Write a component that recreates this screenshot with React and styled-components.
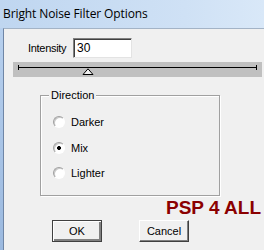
import styled, { createGlobalStyle } from 'styled-components';

const GlobalStyle = createGlobalStyle`
  html, body {
    margin: 0;
    padding: 0;
    background: #f0f0f0;
  }
  body {
    font-family: 'Liberation Sans', Arial, sans-serif;
    font-size: 11px;
    color: #000;
  }
`;

const directions = [
  { label: 'Darker', checked: false },
  { label: 'Mix', checked: true },
  { label: 'Lighter', checked: false },
];

function App() {
  return (
    <>
      <GlobalStyle />
      <Window>
        <TitleBar>Bright Noise Filter Options</TitleBar>
        <Body>
          <Frame />
          <Client>
            <IntensityRow>
              <Label>Intensity</Label>
              <NumberBox>30</NumberBox>
            </IntensityRow>
            <SliderTrack>
              <SliderLine />
              <Thumb width="12" height="7" viewBox="0 0 12 7">
                <path d="M6 0.8 L11 6.5 L1 6.5 Z" fill="#f0f0f0" stroke="#000" strokeWidth="1" />
              </Thumb>
            </SliderTrack>
            <GroupBox>
              <Caption>Direction</Caption>
              {directions.map((d) => (
                <RadioRow key={d.label}>
                  <Radio $checked={d.checked} />
                  <span>{d.label}</span>
                </RadioRow>
              ))}
            </GroupBox>
            <Watermark>PSP 4 ALL</Watermark>
            <ButtonRow>
              <Button $default>OK</Button>
              <Button>Cancel</Button>
            </ButtonRow>
          </Client>
        </Body>
      </Window>
    </>
  );
}

const Window = styled.div`
  width: 264px;
  height: 250px;
  display: flex;
  flex-direction: column;
  overflow: hidden;
`;

const TitleBar = styled.div`
  height: 28px;
  box-sizing: border-box;
  padding: 5px 0 0 3px;
  font-family: 'Open Sans', 'Noto Sans', sans-serif;
  font-size: 12px;
  letter-spacing: -0.1px;
  background: linear-gradient(to right, #bfd6f0, #cfe1f5 70%, #d9e8f8);
  color: #000;
`;

const Body = styled.div`
  flex: 1;
  display: flex;
`;

const Frame = styled.div`
  width: 3px;
  background: linear-gradient(to bottom, #b7d0ee, #9bb9df);
`;

const Client = styled.div`
  flex: 1;
  display: flex;
  flex-direction: column;
  background: #f0f0f0;
  border-left: 1px solid #6f86a6;
  border-top: 1px solid #a3b3c6;
  padding-top: 9px;
`;

const IntensityRow = styled.div`
  display: flex;
  align-items: center;
  height: 20px;
  padding-left: 24px;
`;

const Label = styled.span`
  width: 45px;
  letter-spacing: -0.3px;
`;

const NumberBox = styled.div`
  width: 59px;
  height: 20px;
  box-sizing: border-box;
  background: #fff;
  border: 1px solid;
  border-color: #808080 #e3e3e3 #e3e3e3 #808080;
  box-shadow: inset 1px 1px 0 #404040;
  padding: 2px 0 0 3px;
  font-size: 12px;
`;

const SliderTrack = styled.div`
  position: relative;
  height: 15px;
  margin: 4px 2px 0 9px;
  background: #c0c0c0;
`;

const SliderLine = styled.div`
  position: absolute;
  left: 5px;
  right: 5px;
  top: 5px;
  height: 1px;
  background: #000;
  &::before,
  &::after {
    content: '';
    position: absolute;
    top: -2px;
    width: 1px;
    height: 5px;
    background: #000;
  }
  &::before {
    left: 0;
  }
  &::after {
    right: 0;
  }
`;

const Thumb = styled.svg`
  position: absolute;
  left: 69px;
  top: 6px;
`;

const GroupBox = styled.div`
  width: 180px;
  height: 101px;
  box-sizing: border-box;
  margin: 18px 0 0 36px;
  border: 1px solid #a0a0a0;
  box-shadow: 1px 1px 0 #fff, inset 1px 1px 0 #fff;
  display: flex;
  flex-direction: column;
  padding: 0 0 0 12px;
`;

const Caption = styled.div`
  align-self: flex-start;
  margin: -7px 0 0 -4px;
  padding: 0 2px;
  background: #f0f0f0;
  line-height: 13px;
`;

const RadioRow = styled.div`
  display: flex;
  align-items: center;
  gap: 6px;
  height: 12px;
  margin-top: 13.5px;
  &:nth-of-type(2) {
    margin-top: 14px;
  }
`;

const Radio = styled.span`
  width: 12px;
  height: 12px;
  box-sizing: border-box;
  border-radius: 50%;
  border: 1px solid;
  border-color: #a0a0a0 #fff #fff #a0a0a0;
  background: radial-gradient(circle, ${(p) => (p.$checked ? '#000 0 1.8px' : '#fff 0 1px')}, #fff 2.2px);
  box-shadow: inset 1px 1px 0 #c8c8c8;
`;

const Watermark = styled.div`
  align-self: flex-end;
  margin: 2px 3px 0 0;
  font-weight: bold;
  font-size: 19px;
  line-height: 19px;
  color: #8b0000;
`;

const ButtonRow = styled.div`
  display: flex;
  gap: 37px;
  padding-left: 48px;
  margin-top: 3px;
`;

const Button = styled.div`
  width: 50px;
  height: 22px;
  box-sizing: border-box;
  display: flex;
  align-items: center;
  justify-content: center;
  font-size: 11px;
  background: #f0f0f0;
  border: 1px solid;
  border-color: ${(p) => (p.$default ? '#404040' : '#fff #404040 #404040 #fff')};
  box-shadow: ${(p) =>
    p.$default
      ? 'inset 1px 1px 0 #fff, inset -1px -1px 0 #808080, inset -2px -2px 0 #808080'
      : 'inset -1px -1px 0 #808080'};
`;

export default App;
